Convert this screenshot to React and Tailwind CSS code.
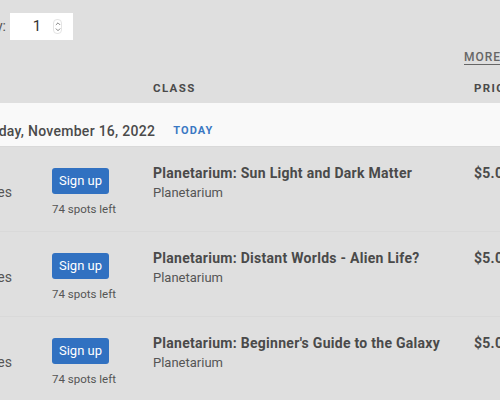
import { ChevronUp, ChevronDown } from "lucide-react";

const classes = [
  { title: "Planetarium: Sun Light and Dark Matter", venue: "Planetarium" },
  { title: "Planetarium: Distant Worlds - Alien Life?", venue: "Planetarium" },
  { title: "Planetarium: Beginner's Guide to the Galaxy", venue: "Planetarium" },
];

const App = () => {
  return (
    <div
      className="w-[500px] h-[400px] overflow-hidden bg-[#dfdfdf] text-[#444]"
      style={{ fontFamily: "Roboto, 'Liberation Sans', sans-serif" }}
    >
      <div className="-ml-[120px] w-[740px]">
        {/* Quantity */}
        <div className="flex items-center pt-[13px]">
          <div className="w-[126px] text-right text-[14px] text-[#555]">Quantity:</div>
          <div className="ml-[4px] w-[63px] h-[27px] bg-white flex items-center">
            <span className="ml-[20px] w-[14px] text-center text-[15px] text-[#333]">1</span>
            <span className="ml-[9px] flex flex-col items-center justify-center w-[9px] h-[15px] rounded-[4px] border border-[#e4e4e4] text-[#666]">
              <ChevronUp className="w-[8px] h-[8px] -mb-[2px]" strokeWidth={2.5} />
              <ChevronDown className="w-[8px] h-[8px]" strokeWidth={2.5} />
            </span>
          </div>
        </div>

        {/* More link */}
        <div className="pl-[584px] pt-[9px] text-[12px] leading-[16px]">
          <span className="font-medium tracking-[0.08em] text-[#666] underline underline-offset-[3px]">
            MORE
          </span>
        </div>

        {/* Column headers */}
        <div className="flex h-[38px] pt-[10px] items-center text-[11.5px] font-bold tracking-[0.12em] text-[#4a4a4a]">
          <div className="w-[172px]">TIME</div>
          <div className="w-[101px]"></div>
          <div className="w-[321px]">CLASS</div>
          <div>PRICE</div>
        </div>

        {/* Date band */}
        <div className="h-[43px] bg-[#f9f9f9] flex items-center pt-[13px]">
          <span className="ml-[67px] text-[14px] font-medium tracking-[0.02em] text-[#4a4a4a]">
            Wednesday, November 16, 2022
          </span>
          <span className="ml-[18px] text-[11px] font-bold tracking-[0.1em] text-[#3a78c3]">TODAY</span>
        </div>

        {/* Rows */}
        {classes.map((c, i) => (
          <div key={i} className="flex h-[85px] pt-[17px] border-t border-[#d9d9d9] first:border-t-0">
            <div className="w-[172px] flex justify-end pr-[40px]">
              <div className="text-[14px] text-[#555] leading-[19px]">
                <div>7:00 PM</div>
                <div>60 minutes</div>
              </div>
            </div>
            <div className="w-[101px] flex flex-col items-start">
              <button className="mt-[4px] w-[57px] h-[26px] rounded-[3px] bg-[#3171c1] text-white text-[13px]">
                Sign up
              </button>
              <span className="mt-[7px] text-[11.5px] text-[#555]">74 spots left</span>
            </div>
            <div className="w-[321px] leading-[19px]">
              <div className="text-[14px] font-bold tracking-[0.02em] text-[#4a4a4a]">{c.title}</div>
              <div className="text-[13px] text-[#555]">{c.venue}</div>
            </div>
            <div className="text-[14px] font-bold tracking-[0.02em] text-[#4a4a4a] leading-[19px]">$5.00</div>
          </div>
        ))}
      </div>
    </div>
  );
};

export default App;
